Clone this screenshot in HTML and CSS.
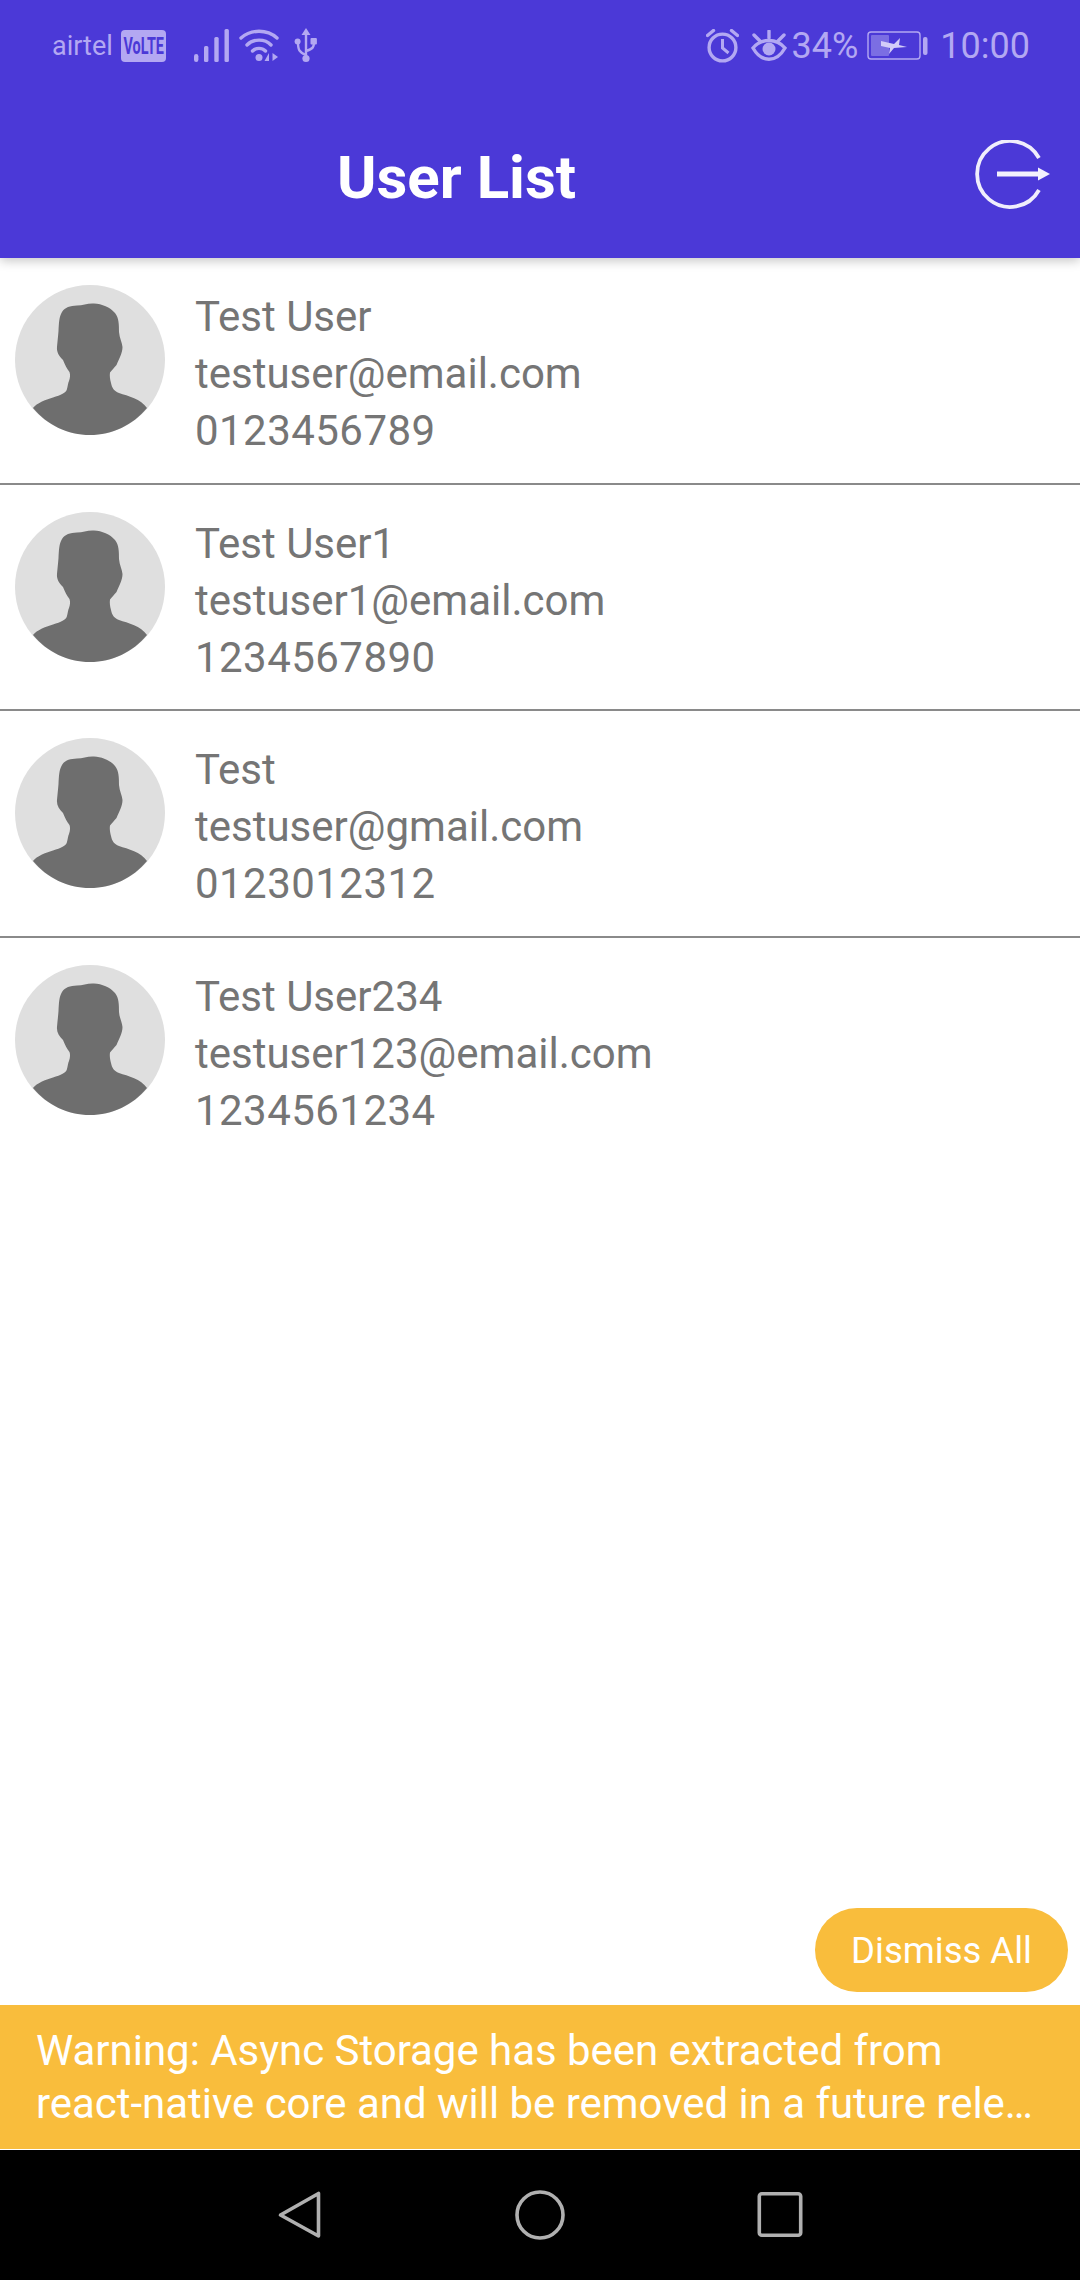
FILE: index.html
```html
<!DOCTYPE html>
<html lang="en">
<head>
<meta charset="utf-8">
<title>User List</title>
<link rel="stylesheet" href="styles.css">
</head>
<body>
<div class="app">
  <header class="top">
    <div class="status">
      <div class="status-left">
        <span class="carrier">airtel</span>
        <span class="volte"><span class="volte-text">VoLTE</span></span>
        <svg class="sig" width="35" height="34" viewBox="0 0 35 34"><g fill="#b3a8f2"><rect x="0" y="25" width="4.400" height="8" rx="2.200"/><rect x="10" y="17" width="4.400" height="16" rx="1.500"/><rect x="20.300" y="8" width="4.400" height="25" rx="1.500"/><rect x="30.500" y="0" width="4.400" height="33" rx="1.500"/></g></svg>
        <svg class="wifi" width="40" height="34" viewBox="0 0 40 34"><g fill="none" stroke="#b3a8f2" stroke-width="3.400" stroke-linecap="round"><path d="M2 9C12 0 28 0 38 9"/><path d="M8 16C14 9.500 26 9.500 32 16"/><path d="M13.500 22C17 18.500 23 18.500 26.500 22"/></g><circle cx="20" cy="28.500" r="3.500" fill="#b3a8f2"/><path d="M30 24V32H25.500ZM33.500 24V32L39 28Z" fill="#b3a8f2"/></svg>
        <svg class="usb" width="24" height="36" viewBox="0 0 24 36"><g fill="#b3a8f2"><path d="M12 0L16.500 7H7.500Z"/><circle cx="12" cy="30.500" r="3.600"/><circle cx="3.600" cy="13.500" r="3"/><rect x="16.500" y="10" width="6.400" height="6.400" rx="1"/></g><path d="M12 5V30M12 27C5 24 4 22 4 14M12 23C19 21 20 19 20 14" fill="none" stroke="#b3a8f2" stroke-width="2.400"/></svg>
      </div>
      <div class="status-right">
        <svg class="alarm" width="33" height="34" viewBox="0 0 33 34"><circle cx="16.500" cy="18.500" r="13.400" fill="none" stroke="#b3a8f2" stroke-width="3.400"/><path d="M16.500 10V19L22.500 24" fill="none" stroke="#b3a8f2" stroke-width="3"/><path d="M1.500 6.500L7.500 1.500M31.500 6.500L25.500 1.500" stroke="#b3a8f2" stroke-width="3.400" stroke-linecap="round"/></svg>
        <svg class="eye" width="36" height="32" viewBox="0 0 36 32"><path d="M2 18C10.500 8 25.500 8 34 18C25.500 33 10.500 33 2 18Z" fill="none" stroke="#b3a8f2" stroke-width="3.400"/><circle cx="18" cy="19" r="6.500" fill="#b3a8f2"/><path d="M18 1V8M3 5L9 11M33 5L27 11" stroke="#b3a8f2" stroke-width="3.400" stroke-linecap="round"/></svg>
        <span class="pct">34%</span>
        <svg class="batt" width="62" height="30" viewBox="0 0 62 30"><rect x="1" y="1" width="52" height="27" rx="3" fill="none" stroke="#b3a8f2" stroke-width="1.400"/><rect x="4" y="4" width="18" height="21" rx="1" fill="#7b6ee3"/><path d="M14 10L27 13L33 7L32 14L40 16L27 17L22 23L23 17L14 15Z" fill="#d3ccf8"/><rect x="56" y="6" width="4.500" height="18" rx="2" fill="#b3a8f2"/></svg>
        <span class="clock">10:00</span>
      </div>
    </div>
    <div class="bar">
      <h1 class="title">User List</h1>
      <svg class="logout" width="76" height="70" viewBox="0 0 76 70"><path d="M65 18A33 33 0 1 0 65 50" fill="none" stroke="#f0eefc" stroke-width="3.800"/><path d="M23 34H65" stroke="#f3f1fd" stroke-width="5"/><path d="M64 27.500L76 34L64 40.500Z" fill="#f3f1fd"/></svg>
    </div>
  </header>

  <main class="list">
    <article class="row">
      <svg class="avatar" viewBox="0 0 150 150"><use href="#person"/></svg>
      <div class="info"><div>Test User</div><div>testuser@email.com</div><div class="phone">0123456789</div></div>
    </article>
    <article class="row">
      <svg class="avatar" viewBox="0 0 150 150"><use href="#person"/></svg>
      <div class="info"><div>Test User1</div><div>testuser1@email.com</div><div class="phone">1234567890</div></div>
    </article>
    <article class="row">
      <svg class="avatar" viewBox="0 0 150 150"><use href="#person"/></svg>
      <div class="info"><div>Test</div><div>testuser@gmail.com</div><div class="phone">0123012312</div></div>
    </article>
    <article class="row row-last">
      <svg class="avatar" viewBox="0 0 150 150"><use href="#person"/></svg>
      <div class="info"><div>Test User234</div><div>testuser123@email.com</div><div class="phone">1234561234</div></div>
    </article>
  </main>

  <div class="dismiss-wrap"><button class="dismiss">Dismiss All</button></div>
  <div class="warning">
    <div class="warn-line">Warning: Async Storage has been extracted from</div>
    <div class="warn-line">react-native core and will be removed in a future rele…</div>
  </div>
  <nav class="nav">
    <svg width="50" height="50" viewBox="0 0 50 50"><path d="M43.500 3.500V46L5.500 25Z" fill="none" stroke="#b0b0b0" stroke-width="3.600" stroke-linejoin="round"/></svg>
    <svg width="50" height="50" viewBox="0 0 50 50"><circle cx="25" cy="25" r="23" fill="none" stroke="#b0b0b0" stroke-width="3.600"/></svg>
    <svg width="50" height="50" viewBox="0 0 50 50"><rect x="4.300" y="3.800" width="41.400" height="41.400" rx="2.500" fill="none" stroke="#b0b0b0" stroke-width="3.600"/></svg>
  </nav>
</div>
<svg class="defs" width="0" height="0">
  <defs>
    <g id="person">
      <circle cx="75" cy="75" r="75" fill="#dfdfdf"/>
      <path d="M18 123C22 118 30 115 38 112.500C46 110 51 108 52 104C53 100 53 98 54 96C55 93 55.500 90 54.500 87C52 84 50 80 48 75C44 71 41.500 67 42 62C42.500 56 43 52 43.500 46C44 38 44 32 47 27C50 22 55 21 62 20.500C68 20.500 73 18 79 18.500C87 19 95 22 100 28C104 33 104 40 104 47C104.500 53 107 57 107.500 62C107.500 68 104 74 101.500 80C99 83 97 85 95 87.500C94.500 91 95 94 96 98C97 103 99 106 104 108C113 111 126 114 132 123C118 140 97 150 75 150C53 150 32 140 18 123Z" fill="#6e6e6e"/>
    </g>
  </defs>
</svg>
</body>
</html>
```
FILE: styles.css
```css
* { box-sizing: border-box; }
html, body { margin: 0; padding: 0; }
body { width: 1080px; height: 2280px; overflow: hidden; background: #fff; font-family: Roboto, "Liberation Sans", sans-serif; }
.app { display: flex; flex-direction: column; height: 2280px; }
.top { height: 258px; background: #4b39d7; box-shadow: 0 3px 10px rgba(0,0,0,.22); position: relative; z-index: 1; flex: none; }
.status { height: 90px; display: flex; justify-content: space-between; align-items: flex-start; padding: 28px 50px 0 52px; color: #b3a8f2; }
.status-left, .status-right { display: flex; align-items: center; height: 36px; }
.carrier { font-size: 27px; margin-right: 8px; }
.volte { width: 45px; height: 32px; border-radius: 4px; background: #b3a8f2; color: #4b39d7; display: flex; justify-content: center; align-items: center; overflow: hidden; }
.volte-text { font-size: 24px; font-weight: 700; line-height: 32px; transform: scaleX(.6); flex: none; }
.sig { margin-left: 28px; }
.wifi { margin-left: 10px; }
.usb { margin-left: 15px; }
.eye { margin-left: 12px; }
.pct { font-size: 36px; margin-left: 5px; }
.batt { margin-left: 9px; }
.clock { font-size: 36px; margin-left: 11px; }
.bar { height: 168px; position: relative; }
.title { margin: 0; position: absolute; left: 337px; top: 50px; font-size: 60px; line-height: 76px; font-weight: 700; color: #fff; }
.logout { position: absolute; left: 974px; top: 50px; }
.list { flex: 1; }
.row { height: 226.7px; display: flex; align-items: flex-start; padding: 27px 0 0 15px; border-bottom: 2px solid #8a8a8a; }
.row-last { border-bottom: 0; }
.avatar { width: 150px; height: 150px; flex: none; }
.info { margin-left: 30px; margin-top: 3px; font-size: 42px; line-height: 57px; color: #757575; }
.phone { letter-spacing: .45px; }
.dismiss-wrap { display: flex; justify-content: flex-end; padding: 0 12px 13px 0; flex: none; }
.dismiss { width: 253px; height: 84px; border: 0; border-radius: 42px; background: #f9bd3c; color: #fff; font: 400 36.500px Roboto, sans-serif; padding: 0; }
.warning { height: 145px; background: #f9bd3c; color: #fff; font-size: 42px; line-height: 53px; padding: 19px 0 0 36px; flex: none; border-bottom: 1px solid #fff; }
.warn-line { white-space: nowrap; letter-spacing: -.03px; }
.nav { height: 130px; background: #000; display: flex; justify-content: center; align-items: center; gap: 190px; flex: none; }
.defs { position: absolute; }
```
